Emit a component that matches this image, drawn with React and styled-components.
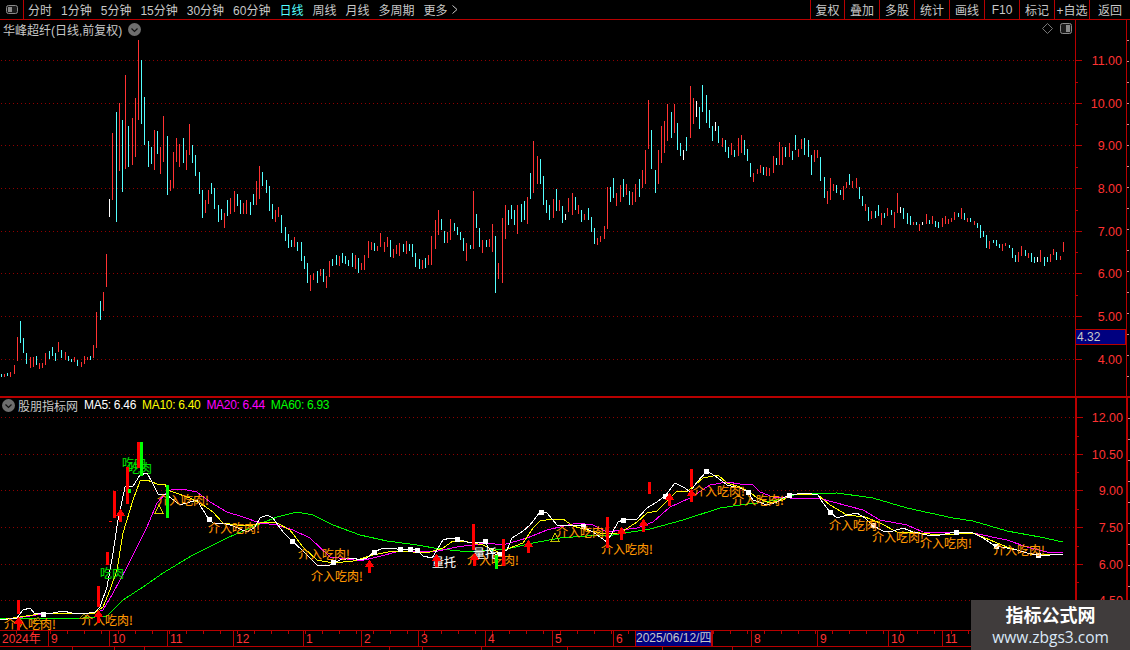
import styled, { createGlobalStyle } from 'styled-components'

const RED_LINE = '#b80000'
const AXIS_RED = '#ff3232'
const FONT = '"Liberation Sans", "Noto Sans CJK SC", sans-serif'

const GlobalStyle = createGlobalStyle`
  html, body {
    margin: 0;
    background: #000;
  }
`

const Page = styled.div`
  position: relative;
  width: 1130px;
  height: 650px;
  overflow: hidden;
  display: flex;
  flex-direction: column;
  background: #000;
  color: #c8c8c8;
  font-family: ${FONT};
  font-size: 12px;
`

const Toolbar = styled.div`
  display: flex;
  height: 19px;
  flex: none;
  border-bottom: 1px solid ${RED_LINE};
`

const ToggleCell = styled.div`
  width: 23px;
  display: flex;
  align-items: center;
  justify-content: center;
  border-right: 1px solid ${RED_LINE};
`

const Periods = styled.div`
  display: flex;
  align-items: center;
  gap: 9px;
  padding-left: 4px;
  flex: 1;
`

const Period = styled.span`
  display: flex;
  align-items: center;
  gap: 4px;
  color: ${(p) => (p.$active ? '#54ffff' : '#c8c8c8')};
  white-space: nowrap;
`

const ToolButton = styled.div`
  width: ${(p) => p.$w}px;
  box-sizing: border-box;
  display: flex;
  align-items: center;
  justify-content: center;
  border-left: 1px solid ${RED_LINE};
  white-space: nowrap;
`

const Panel = styled.div`
  position: relative;
  display: flex;
  flex: none;
  height: ${(p) => p.$h}px;
  border-top: ${(p) => (p.$rule ? `2px solid ${RED_LINE}` : 'none')};
`

const ChartArea = styled.div`
  width: 1075px;
  flex: none;
`

const ChartSvg = styled.svg`
  display: block;
  shape-rendering: crispEdges;
`

const AxisColumn = styled.div`
  position: relative;
  width: 51px;
  flex: none;
  box-sizing: border-box;
  border-left: ${(p) => p.$weight}px solid ${RED_LINE};
`

const AxisStrip = styled.div`
  flex: 1;
  border-left: ${(p) => p.$weight}px solid ${RED_LINE};
  background: repeating-linear-gradient(
    to bottom,
    transparent 0 20px,
    #c89090 20px 21px
  );
  background-size: 2px 100%;
  background-repeat: no-repeat;
`

const PriceTag = styled.div`
  position: absolute;
  left: 0;
  top: 309px;
  width: 50px;
  height: 16px;
  box-sizing: border-box;
  border: 1px solid ${RED_LINE};
  border-left: none;
  background: #000080;
  color: #c8c8c8;
  line-height: 14px;
  padding-left: 1px;
`

const TitleRow = styled.div`
  position: absolute;
  left: ${(p) => p.$left}px;
  top: ${(p) => p.$top}px;
  display: flex;
  align-items: center;
  height: 16px;
  gap: ${(p) => p.$gap}px;
  white-space: nowrap;
`

const Legend = styled.span`
  margin-left: 3px;
  letter-spacing: -0.3px;
  color: ${(p) => p.$color};
`

const CornerIcons = styled.div`
  position: absolute;
  right: 58px;
  top: 3px;
  display: flex;
  align-items: center;
  gap: 7px;
`

const TimeBar = styled.div`
  display: flex;
  flex: none;
  height: 15px;
  border-top: 1px solid ${RED_LINE};
  border-bottom: 1px solid ${RED_LINE};
  background: repeating-linear-gradient(
      to right,
      transparent 0 16px,
      ${RED_LINE} 16px 17px
    )
    top left / 100% 3px no-repeat;
`

const TimeCell = styled.div`
  width: ${(p) => p.$w}px;
  box-sizing: border-box;
  flex: none;
  padding-left: 2px;
  border-left: ${(p) => (p.$first ? 'none' : `1px solid ${RED_LINE}`)};
  color: ${AXIS_RED};
  line-height: 16px;
  white-space: nowrap;
`

const DateCell = styled.div`
  width: 77px;
  flex: none;
  box-sizing: border-box;
  background: #000080;
  border-left: 1px solid ${RED_LINE};
  border-right: 1px solid ${RED_LINE};
  color: #c8c8c8;
  text-align: center;
  line-height: 15px;
  white-space: nowrap;
`

const SubRow = styled.div`
  display: flex;
  flex: 1;
`

const SubCell = styled.div`
  width: ${(p) => p.$w}px;
  box-sizing: border-box;
  flex: none;
  border-right: 1px solid ${RED_LINE};
`

const Watermark = styled.div`
  position: absolute;
  right: 0;
  bottom: 0;
  width: 159px;
  height: 50px;
  background: #403c3c;
  display: flex;
  flex-direction: column;
  align-items: center;
  justify-content: center;
`

const WatermarkTitle = styled.div`
  color: #fff;
  font-size: 18px;
  font-weight: 700;
  line-height: 24px;
`

const WatermarkUrl = styled.div`
  color: #dbe9f8;
  font-family: "Open Sans", "Liberation Sans", sans-serif;
  font-size: 15.5px;
  line-height: 18px;
`

const Label = styled.text`
  font-family: "Noto Sans CJK SC", ${FONT};
  font-size: 12px;
  shape-rendering: auto;
  fill: ${(p) => p.$color};
  stroke: ${(p) => p.$color};
  stroke-width: 0.08px;
`

const AxisText = styled.text`
  font-family: ${FONT};
  font-size: 12.5px;
  fill: ${AXIS_RED};
  text-anchor: end;
`

// candle rows read off the chart: colour + top,bottom, y is relative to base at 3x
const parseRows = (base, text) =>
  text
    .trim()
    .split(/\s+/)
    .map((s) => {
      const [t, b] = s.slice(1).split(',').map(Number)
      return { c: s[0], top: base + t / 3, bottom: base + b / 3 }
    })

const candles = [
  ...parseRows(
    50,
    `c972,981 r972,981 c969,978 r966,981 r945,972 r861,933 c813,879 c864,909 c909,942 r921,954
     r921,951 c918,945 r939,957 r939,954 r909,945 c903,927 c891,918 c909,933 r876,906 c900,924
     r906,930 c918,933 c927,936 r921,936 c930,948 r936,951 r918,942 r921,930 c918,930 r885,924
     r786,894 c753,810 r726,783 r612,711 w447,501 r249,450 c186,516 r159,363 c210,426 r75,357
     c228,351 r204,345 r144,321 r-30,210 c30,222 c141,285 c273,351 c291,342 r240,360 c243,312
     r291,372 r198,336 c258,435 r390,423 r306,414 r264,336 r282,351 c264,339 r300,360 r222,315
     c285,339 c315,378 c366,432 c420,504 r450,489 r420,462 c399,432 c414,477 c465,516 c477,510
     r489,534 c450,498 r444,492 r423,486 c432,468 c450,492 r459,492 r450,492 c456,495 c432,465
     r393,465 r348,447 c366,408 c390,429 c408,483 c462,507 r480,516 r471,501`
  ),
  ...parseRows(
    130,
    `c255,309 c291,333 c312,354 c330,351 r321,351 c336,363 c336,393 c378,417 c399,459 r435,483
     r429,450 c423,459 r417,438 c417,456 r438,474 r393,441 c387,408 c375,405 r378,408 c369,399
     c378,402 c390,408 c369,411 r375,417 c384,429 r399,420 r375,420 r333,384 r336,360 c339,363
     r348,363 r309,351 r336,366 r321,351 c330,381 r357,384 r345,372 r339,378 c342,366 r333,372
     c342,363 c342,381 c369,411 c387,417 r390,417 c384,414 r375,405 r318,405 r270,357 r240,315
     c267,300 c303,339 r306,339 r267,330 c279,303 c291,315 c306,330 c324,363 r339,393 c345,357
     r183,357 c252,294 c294,351 r330,369 c330,351 r327,351 r282,366 c318,489 r399,447 r264,459
     r225,327 c240,285 c225,267 c240,285 r225,312 c222,276 c213,270 r201,282 c129,207 r33,189
     r78,162 c87,162 c138,225 c210,249 c225,270 r207,264 c177,243 r210,243`
  ),
  ...parseRows(
    80,
    `c378,429 w402,420 r354,396 r339,405 c351,390 r375,402 c390,426 r402,420 c384,420 c411,456
     c444,492 r474,495 r468,486 r438,477 r321,447 c321,366 c294,354 r339,378 r315,366 c297,351
     r312,345 c333,375 r336,375 r312,366 c297,351 r270,324 r210,312 r60,207 c150,267 c270,339
     r210,312 r138,249 r123,219 r72,183 c96,174 r72,159 c129,210 c189,228 w210,240 c171,213
     r18,174 r54,132 w63,111 c81,147 c15,96 c45,129 c90,144 c138,183 w126,153 c138,189
     r174,201 c180,216 c201,234 r189,225 c210,231 r174,228 r165,219 c180,225 c207,243 c249,291
     r279,306 r267,282 r255,279 c261,285 r261,288 r264,288 r228,279 c234,255 r186,255 r201,255
     c201,231 r189,231 c213,240 c165,210 r207,231 r177,207 c174,225 c180,231 c225,285 r210,246
     r210,234 c231,303 c291,354 r333,372 r294,360`
  ),
  ...parseRows(
    160,
    `r72,93 c75,99 c90,105 r78,120 r66,84 c42,75 r63,84 r54,84 c81,117 c108,138 r132,153 c141,183
     r153,177 c153,174 c135,168 r159,195 c159,174 r144,168 c150,165 r156,204 r99,159 w141,159
     c144,177 c159,192 c168,195 r186,195 c186,195 r192,213 w186,195 r162,192 c180,192 r168,192
     c183,201 c186,204 r174,201 r168,192 r177,192 r174,186 r156,180 c159,171 r144,177 c159,180
     r174,186 c174,186 r183,195 c189,204 c195,234 c213,231 c225,264 r243,267 c240,249 c240,258
     c252,264 r252,273 r249,258 c255,264 c264,294 c285,306 r276,306 r258,288 c270,288 r279,294
     c279,306 c291,309 w291,306 r270,306 c291,318 c291,306 r282,306 r267,285 c276,300 r288,300
     r246,276`
  ),
]

const CANDLE_COLORS = { c: '#54ffff', r: '#ff3232', w: '#ffffff' }

const ma5 =
  '0,620 17,618 23,610 30,608 35,614 42,613 53,613 63,611 72,613 83,614 95,612 100,607 107,587 113,553 118,520 125,487 133,486 140,475 147,473 152,482 158,494 167,495 180,505 197,500 203,510 208,518 213,523 223,523 233,526 247,532 255,527 260,518 267,515 273,518 283,532 292,541 302,550 310,558 317,565 330,565 340,560 353,558 360,560 367,558 374,552 383,548 397,549 410,549 417,550 423,556 432,558 437,550 443,540 450,538 457,539 467,542 485,542 492,553 498,555 507,550 512,538 523,531 530,525 540,512 547,513 557,525 568,525 582,526 593,532 607,542 612,533 618,522 623,520 637,519 647,508 657,502 665,496 675,483 685,488 690,492 697,482 707,471 718,478 727,485 740,488 748,492 753,500 767,505 777,502 783,498 790,495 805,493 818,495 823,503 830,512 837,518 847,515 857,513 865,518 872,525 883,531 893,531 903,528 913,532 927,535 940,535 955,532 973,533 983,538 995,546 1007,548 1017,550 1027,553 1038,555 1050,555 1063,554'
const ma10 =
  '0,620 33,615 43,613 67,613 95,613 103,607 110,590 117,570 123,533 133,500 140,481 147,480 157,484 165,484 167,490 173,492 190,498 203,505 213,512 223,523 237,525 253,525 263,522 277,523 290,530 303,547 317,560 333,563 353,561 360,559 373,555 393,551 413,552 430,552 443,548 453,541 463,541 483,545 500,553 510,548 523,543 533,528 540,521 552,519 563,519 573,526 587,530 600,533 620,533 637,522 647,513 657,511 668,500 677,491 688,491 703,478 718,475 727,483 740,487 750,492 757,498 770,503 783,500 790,495 805,494 818,495 830,505 847,515 865,517 880,523 897,532 920,533 940,535 973,533 990,540 1007,547 1030,554 1063,555'
const ma20 =
  '17,618 43,614 93,613 103,610 113,593 127,567 137,547 147,527 157,503 167,492 173,489 187,490 197,492 210,502 227,512 243,517 260,523 277,525 293,530 310,538 330,557 347,559 360,561 377,557 400,551 433,552 457,547 487,543 503,545 527,538 547,530 577,523 593,525 607,532 637,528 653,522 670,507 690,498 710,485 727,482 740,484 752,484 760,492 773,497 790,498 818,498 833,502 863,510 880,520 907,525 923,532 973,533 1007,540 1027,547 1047,552 1063,553'
const ma60 =
  '0,619 83,618 107,616 123,600 143,587 163,573 193,555 227,538 257,525 277,517 297,512 313,515 333,525 360,535 387,541 417,545 440,549 470,552 507,549 533,543 560,538 587,536 613,535 650,529 683,520 720,508 740,505 757,503 777,500 797,494 837,493 873,498 907,508 953,518 973,521 1007,531 1040,537 1063,542'

const priceLevels = [
  ['11.00', 60],
  ['10.00', 103],
  ['9.00', 145],
  ['8.00', 188],
  ['7.00', 231],
  ['6.00', 273],
  ['5.00', 316],
  ['4.00', 359],
]

const indicatorLevels = [
  ['12.00', 417],
  ['10.50', 454],
  ['9.00', 490],
  ['7.50', 527],
  ['6.00', 564],
  ['4.50', 600],
]

const thickBars = [
  [17, 600, 614, '#ff0000'],
  [97, 586, 607, '#ff0000'],
  [106, 552, 565, '#ff0000'],
  [113, 491, 518, '#ff0000'],
  [126, 467, 504, '#ff0000'],
  [137, 442, 468, '#ff0000'],
  [140, 442, 476, '#00ff00'],
  [128, 489, 493, '#00ff00'],
  [166, 485, 518, '#00ff00'],
  [472, 524, 550, '#ff0000'],
  [502, 539, 566, '#ff0000'],
  [495, 555, 569, '#00ff00'],
  [606, 517, 548, '#ff0000'],
  [648, 482, 494, '#ff0000'],
  [690, 469, 487, '#ff0000'],
]

const arrows = [
  [18, 617],
  [98, 610],
  [120, 509],
  [369, 560],
  [436, 554],
  [474, 553],
  [528, 540],
  [621, 527],
  [643, 519],
  [669, 493],
  [691, 489],
]

const triangles = [
  [159, 505, 513, '#e0d000'],
  [555, 533, 541, '#c0c000'],
  [38, 617, 623, '#808000'],
  [84, 614, 618, '#a09000'],
]

const squares = [
  [43, 614], [209, 519], [292, 541], [333, 562], [374, 552], [400, 549],
  [410, 549], [417, 550], [457, 539], [485, 541], [499, 554], [541, 512],
  [583, 526], [623, 520], [665, 496], [706, 471], [748, 492], [789, 495],
  [830, 512], [873, 525], [956, 532], [996, 546], [1038, 555],
]

const eatLabels = [
  [4, 624], [81, 620], [157, 500], [208, 528], [298, 554], [311, 576],
  [467, 560], [601, 549], [556, 532], [693, 491], [732, 500], [829, 525],
  [872, 537], [920, 543], [993, 550],
]

const timeCells = [
  ['2024年', 48], ['9', 61], ['10', 58], ['11', 66], ['12', 70], ['1', 58],
  ['2', 57], ['3', 67], ['4', 67], ['5', 61], ['6', 22],
]

const timeCellsAfter = [
  ['', 39], ['8', 66], ['9', 71], ['10', 54], ['11', 188],
]

const periods = ['分时', '1分钟', '5分钟', '15分钟', '30分钟', '60分钟', '日线', '周线', '月线', '多周期']
const tools = [
  ['复权', 34], ['叠加', 35], ['多股', 35], ['统计', 35], ['画线', 35],
  ['F10', 35], ['标记', 35], ['+自选', 35], ['返回', 41],
]

function PaneToggle({ side, height }) {
  return (
    <svg width="12" height={height} viewBox={`0 0 12 ${height}`}>
      <rect x="0.5" y="0.5" width="11" height={height - 1} rx="2" fill="#1a1a1a" stroke="#8a8a8a" />
      <rect x={side === 'right' ? 6 : 2} y="2" width="4" height={height - 4} fill="#8a8a8a" />
    </svg>
  )
}

function RoundChevron() {
  return (
    <svg width="13" height="13" viewBox="0 0 13 13">
      <circle cx="6.5" cy="6.5" r="6.5" fill="#6e6e6e" />
      <path d="M3.5 5.5 L6.5 8.5 L9.5 5.5" fill="none" stroke="#111" strokeWidth="1.2" />
    </svg>
  )
}

function GridLines({ levels }) {
  return levels.map(([name, y]) => (
    <line key={name} x1="1" x2="1075" y1={y + 0.5} y2={y + 0.5} stroke="#900000" strokeDasharray="1 3" />
  ))
}

function Axis({ levels, top, height }) {
  const minors = levels.slice(0, -1).map(([, y], i) => (y + levels[i + 1][1]) / 2)
  return (
    <ChartSvg width="50" height={height} viewBox={`0 ${top} 50 ${height}`}>
      {levels.map(([name, y]) => (
        <g key={name}>
          <rect x="0" y={y} width="6" height="1" fill={RED_LINE} />
          <AxisText x="46" y={y + 5}>{name}</AxisText>
        </g>
      ))}
      {minors.map((y) => (
        <rect key={y} x="0" y={Math.round(y)} width="2" height="1" fill={RED_LINE} />
      ))}
    </ChartSvg>
  )
}

function CandleChart() {
  const stepX = (1063.3 - 1.3) / (candles.length - 1)
  return (
    <ChartSvg width="1075" height="376" viewBox="0 20 1075 376">
      <GridLines levels={priceLevels} />
      {candles.map((d, i) => (
        <rect
          key={i}
          x={Math.floor(1.3 + i * stepX)}
          y={Math.round(d.top)}
          width="1"
          height={Math.max(2, Math.round(d.bottom - d.top))}
          fill={CANDLE_COLORS[d.c]}
        />
      ))}
    </ChartSvg>
  )
}

function IndicatorChart() {
  return (
    <ChartSvg width="1075" height="232" viewBox="0 398 1075 232">
      <GridLines levels={indicatorLevels} />
      <polyline points={ma60} fill="none" stroke="#00ff00" />
      <polyline points={ma20} fill="none" stroke="#ff00ff" />
      <polyline points={ma10} fill="none" stroke="#ffff00" />
      <polyline points={ma5} fill="none" stroke="#ffffff" />
      {squares.map(([x, y]) => (
        <rect key={x} x={x - 2} y={y - 2} width="5" height="5" fill="#fff" />
      ))}
      {triangles.map(([x, t, b, color]) => (
        <polygon key={x} points={`${x},${t} ${x + 4},${b} ${x - 4},${b}`} fill="none" stroke={color} />
      ))}
      {eatLabels.map(([x, y]) => (
        <Label key={x} x={x} y={y + 5} $color="#ff9900">介入吃肉!</Label>
      ))}
      <Label x="122" y="468" $color="#00e000">吃肉</Label>
      <Label x="128" y="473" $color="#00e000">吃肉</Label>
      <Label x="100" y="578" $color="#00e000">吃肉</Label>
      <Label x="432" y="567" $color="#ffffff">量托</Label>
      <Label x="473" y="558" $color="#ffffff">量托</Label>
      {thickBars.map(([x, t, b, color]) => (
        <rect key={`${x}-${t}`} x={x} y={t} width="3" height={b - t} fill={color} />
      ))}
      <rect x="109" y="521" width="3" height="1" fill="#ff0000" />
      {arrows.map(([x, tip]) => (
        <g key={x} fill="#ff0000">
          <polygon points={`${x + 0.5},${tip} ${x + 5.5},${tip + 7} ${x - 4.5},${tip + 7}`} />
          <rect x={x - 1} y={tip + 6} width="3" height="7" />
        </g>
      ))}
    </ChartSvg>
  )
}

function App() {
  return (
    <Page>
      <GlobalStyle />
      <Toolbar>
        <ToggleCell>
          <PaneToggle side="left" height={9} />
        </ToggleCell>
        <Periods>
          {periods.map((name) => (
            <Period key={name} $active={name === '日线'}>{name}</Period>
          ))}
          <Period>
            更多
            <svg width="6" height="9" viewBox="0 0 6 9">
              <path d="M0.5 0.5 L5 4.5 L0.5 8.5" fill="none" stroke="#c8c8c8" />
            </svg>
          </Period>
        </Periods>
        {tools.map(([name, w]) => (
          <ToolButton key={name} $w={w}>{name}</ToolButton>
        ))}
      </Toolbar>

      <Panel $h={376}>
        <ChartArea>
          <CandleChart />
        </ChartArea>
        <TitleRow $left={3} $top={1} $gap={6}>
          <span>华峰超纤(日线,前复权)</span>
          <RoundChevron />
        </TitleRow>
        <CornerIcons>
          <svg width="11" height="11" viewBox="0 0 11 11">
            <path d="M5.5 0.5 L10.5 5.5 L5.5 10.5 L0.5 5.5 Z" fill="none" stroke="#777" />
          </svg>
          <PaneToggle side="right" height={11} />
        </CornerIcons>
        <AxisColumn $weight={1}>
          <Axis levels={priceLevels} top={20} height={376} />
          <PriceTag>4.32</PriceTag>
        </AxisColumn>
        <AxisStrip $weight={1} />
      </Panel>

      <Panel $h={232} $rule>
        <ChartArea>
          <IndicatorChart />
        </ChartArea>
        <TitleRow $left={2} $top={-1} $gap={3}>
          <RoundChevron />
          <span>股朋指标网</span>
          <Legend $color="#ffffff">MA5: 6.46</Legend>
          <Legend $color="#ffff00">MA10: 6.40</Legend>
          <Legend $color="#ff00ff">MA20: 6.44</Legend>
          <Legend $color="#00ff00">MA60: 6.93</Legend>
        </TitleRow>
        <AxisColumn $weight={2}>
          <Axis levels={indicatorLevels} top={398} height={232} />
        </AxisColumn>
        <AxisStrip $weight={2} />
      </Panel>

      <TimeBar>
        {timeCells.map(([name, w], i) => (
          <TimeCell key={`${name}-${i}`} $w={w} $first={i === 0}>{name}</TimeCell>
        ))}
        <DateCell>2025/06/12/四</DateCell>
        {timeCellsAfter.map(([name, w], i) => (
          <TimeCell key={`${name}-${i}`} $w={w}>{name}</TimeCell>
        ))}
      </TimeBar>
      <SubRow>
        <SubCell $w={73} />
        <SubCell $w={42} />
        <SubCell $w={30} />
        <SubCell $w={245} />
        <SubCell $w={33} />
        <SubCell $w={59} />
        <SubCell $w={86} />
        <SubCell $w={95} />
        <SubCell $w={70} />
      </SubRow>

      <Watermark>
        <WatermarkTitle>指标公式网</WatermarkTitle>
        <WatermarkUrl>www.zbgs3.com</WatermarkUrl>
      </Watermark>
    </Page>
  )
}

export default App
